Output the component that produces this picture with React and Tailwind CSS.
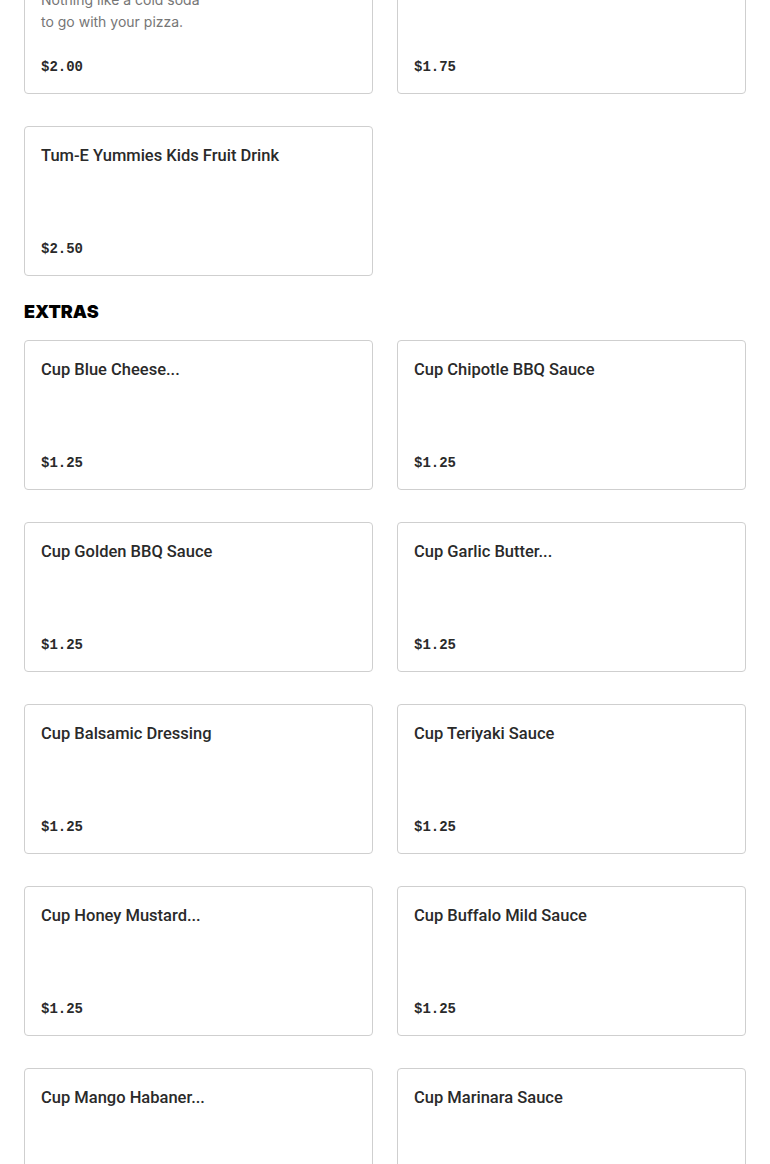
const drinks = [
  { name: 'Coke 2 Liter', desc: ['Nothing like a cold soda', 'to go with your pizza.'], price: '$2.00' },
  { name: '20oz Bottled Soda', price: '$1.75' },
  { name: 'Tum-E Yummies Kids Fruit Drink', price: '$2.50' },
];

const extras = [
  { name: 'Cup Blue Cheese...', price: '$1.25' },
  { name: 'Cup Chipotle BBQ Sauce', price: '$1.25' },
  { name: 'Cup Golden BBQ Sauce', price: '$1.25' },
  { name: 'Cup Garlic Butter...', price: '$1.25' },
  { name: 'Cup Balsamic Dressing', price: '$1.25' },
  { name: 'Cup Teriyaki Sauce', price: '$1.25' },
  { name: 'Cup Honey Mustard...', price: '$1.25' },
  { name: 'Cup Buffalo Mild Sauce', price: '$1.25' },
  { name: 'Cup Mango Habaner...', price: '$1.25' },
  { name: 'Cup Marinara Sauce', price: '$1.25' },
];

const MenuCard = ({ item }) => (
  <div className="flex h-[150px] flex-col justify-between rounded-[4px] border border-[#cfcfcf] bg-white px-4 pt-[17px] pb-[14px]">
    <div>
      <h3 className="text-[16.5px] leading-6 font-medium text-[#2a2a2a] [font-family:Roboto,sans-serif]">{item.name}</h3>
      {item.desc && (
        <p className="mt-[3px] text-[14px] leading-[22px] text-[#767676] [font-family:Inter,sans-serif]">
          {item.desc[0]}
          <br />
          {item.desc[1]}
        </p>
      )}
    </div>
    <span className="text-[14px] leading-6 font-bold text-[#2a2a2a] [font-family:'Liberation_Mono',monospace]">{item.price}</span>
  </div>
);

export default function App() {
  return (
    <div className="overflow-hidden bg-white">
      <div className="-mt-[56px] px-6 pb-10">
        <div className="grid grid-cols-2 gap-x-6 gap-y-8">
          {drinks.map((d) => (
            <MenuCard key={d.name} item={d} />
          ))}
        </div>

        <h2 className="mt-6 mb-4 text-[18px] leading-6 font-black text-black [font-family:Inter,sans-serif]">
          EXTRAS
        </h2>
        <div className="grid grid-cols-2 gap-x-6 gap-y-8">
          {extras.map((e) => (
            <MenuCard key={e.name} item={e} />
          ))}
        </div>
      </div>
    </div>
  );
}
